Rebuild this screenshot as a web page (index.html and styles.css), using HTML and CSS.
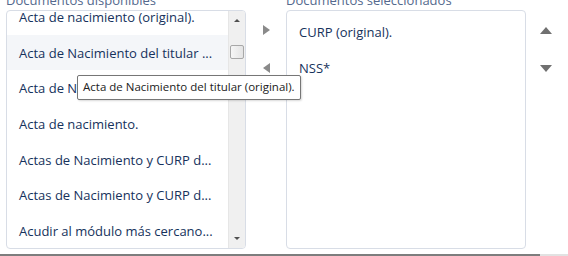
FILE: index.html
```html
<!DOCTYPE html>
<html lang="es">
  <head>
    <meta charset="utf-8" />
    <title>Documentos</title>
    <link rel="stylesheet" href="styles.css">
  </head>

  <body>
    <div class="dual-listbox">
      <div class="field">
        <label class="field-label">Documentos disponibles</label>
        <div class="listbox listbox-source">
          <ul class="options">
            <li class="option">Acta de nacimiento (original).</li>
            <li class="option hover">Acta de Nacimiento del titular ...</li>
            <li class="option">Acta de Nacimiento del titular ...</li>
            <li class="option">Acta de nacimiento.</li>
            <li class="option">Actas de Nacimiento y CURP d...</li>
            <li class="option">Actas de Nacimiento y CURP d...</li>
            <li class="option">Acudir al módulo más cercano...</li>
          </ul>
          <div class="scrollbar">
            <span class="sb-arrow sb-up"></span>
            <span class="sb-thumb"></span>
            <span class="sb-arrow sb-down"></span>
          </div>
        </div>
      </div>

      <div class="move-buttons">
        <button class="icon-btn" title="Mover a seleccionados"><span class="tri tri-right"></span></button>
        <button class="icon-btn" title="Mover a disponibles"><span class="tri tri-left"></span></button>
      </div>

      <div class="field">
        <label class="field-label">Documentos seleccionados</label>
        <div class="listbox listbox-target">
          <ul class="options">
            <li class="option">CURP (original).</li>
            <li class="option">NSS*</li>
          </ul>
        </div>
      </div>

      <div class="order-buttons">
        <button class="icon-btn" title="Subir"><span class="tri tri-up"></span></button>
        <button class="icon-btn" title="Bajar"><span class="tri tri-down"></span></button>
      </div>

      <div class="tooltip">Acta de Nacimiento del titular (original).</div>
    </div>

    <div class="hscroll"><span class="hscroll-thumb"></span></div>
  </body>
</html>
```

FILE: styles.css
```css
body {
  margin: 0;
  font-family: "Open Sans", "Noto Sans", sans-serif;
  color: #16325c;
  background: #fff;
  overflow: hidden;
}

.dual-listbox {
  position: relative;
  display: flex;
  padding-left: 6px;
  height: 249px;
}

.field {
  display: flex;
  flex-direction: column;
  margin-top: -9px;
}

.field-label {
  font-size: 13px;
  line-height: 18px;
  color: #54698d;
  margin-bottom: 1px;
}

.listbox {
  width: 240px;
  height: 239px;
  box-sizing: border-box;
  border: 1px solid #d8dde6;
  border-radius: 4px;
  overflow: hidden;
  background: #fff;
}

.listbox-source {
  display: flex;
}

.options {
  list-style: none;
  margin: 0;
  padding: 0;
  flex: 1;
}

.listbox-source .options {
  margin-top: -12px;
}

.listbox-target .options {
  padding-top: 3px;
}

.option {
  display: flex;
  align-items: center;
  height: 35.7px;
  padding-left: 12px;
  font-size: 13px;
  white-space: nowrap;
}

.listbox-target .option {
  height: 36px;
}

.option.hover {
  background: #f4f6f9;
}

/*=============================================*/

.scrollbar {
  position: relative;
  width: 16px;
  background: #f0f0f0;
  border-left: 1px solid #e6e6e6;
}

.sb-arrow {
  position: absolute;
  left: 5px;
  width: 0;
  height: 0;
  border-left: 3px solid transparent;
  border-right: 3px solid transparent;
}

.sb-up {
  top: 8px;
  border-bottom: 3px solid #505050;
}

.sb-down {
  bottom: 8px;
  border-top: 3px solid #505050;
}

.sb-thumb {
  position: absolute;
  top: 34px;
  left: 1px;
  width: 12px;
  height: 12px;
  background: linear-gradient(to right, #f6f6f6, #e4e4e4);
  border: 1px solid #a8a8a8;
  border-radius: 2px;
}

/*=============================================*/

.move-buttons,
.order-buttons {
  display: flex;
  flex-direction: column;
  align-items: center;
  width: 40px;
  padding-top: 20px;
  gap: 18px;
}

.icon-btn {
  width: 20px;
  height: 20px;
  padding: 0;
  border: 0;
  background: none;
  display: flex;
  align-items: center;
  justify-content: center;
}

.tri {
  width: 0;
  height: 0;
}

.tri-right {
  border-top: 5px solid transparent;
  border-bottom: 5px solid transparent;
  border-left: 7px solid #8a8a8a;
}

.tri-left {
  border-top: 5px solid transparent;
  border-bottom: 5px solid transparent;
  border-right: 7px solid #8a8a8a;
}

.tri-up {
  border-left: 6px solid transparent;
  border-right: 6px solid transparent;
  border-bottom: 7px solid #707070;
}

.tri-down {
  border-left: 6px solid transparent;
  border-right: 6px solid transparent;
  border-top: 7px solid #707070;
}

/*=============================================*/

.tooltip {
  position: absolute;
  left: 77px;
  top: 75px;
  padding: 3px 5px 4px;
  background: #fff;
  border: 1px solid #767676;
  border-radius: 2px;
  box-shadow: 1px 1px 2px rgba(0, 0, 0, 0.15);
  font-family: "Open Sans", sans-serif;
  font-size: 11.5px;
  line-height: 16px;
  color: #222;
  white-space: nowrap;
}

.hscroll {
  display: flex;
  margin-top: 5px;
  height: 2px;
  background: #e2e2e2;
}

.hscroll-thumb {
  width: 540px;
  background: #7d7d7d;
}
```
